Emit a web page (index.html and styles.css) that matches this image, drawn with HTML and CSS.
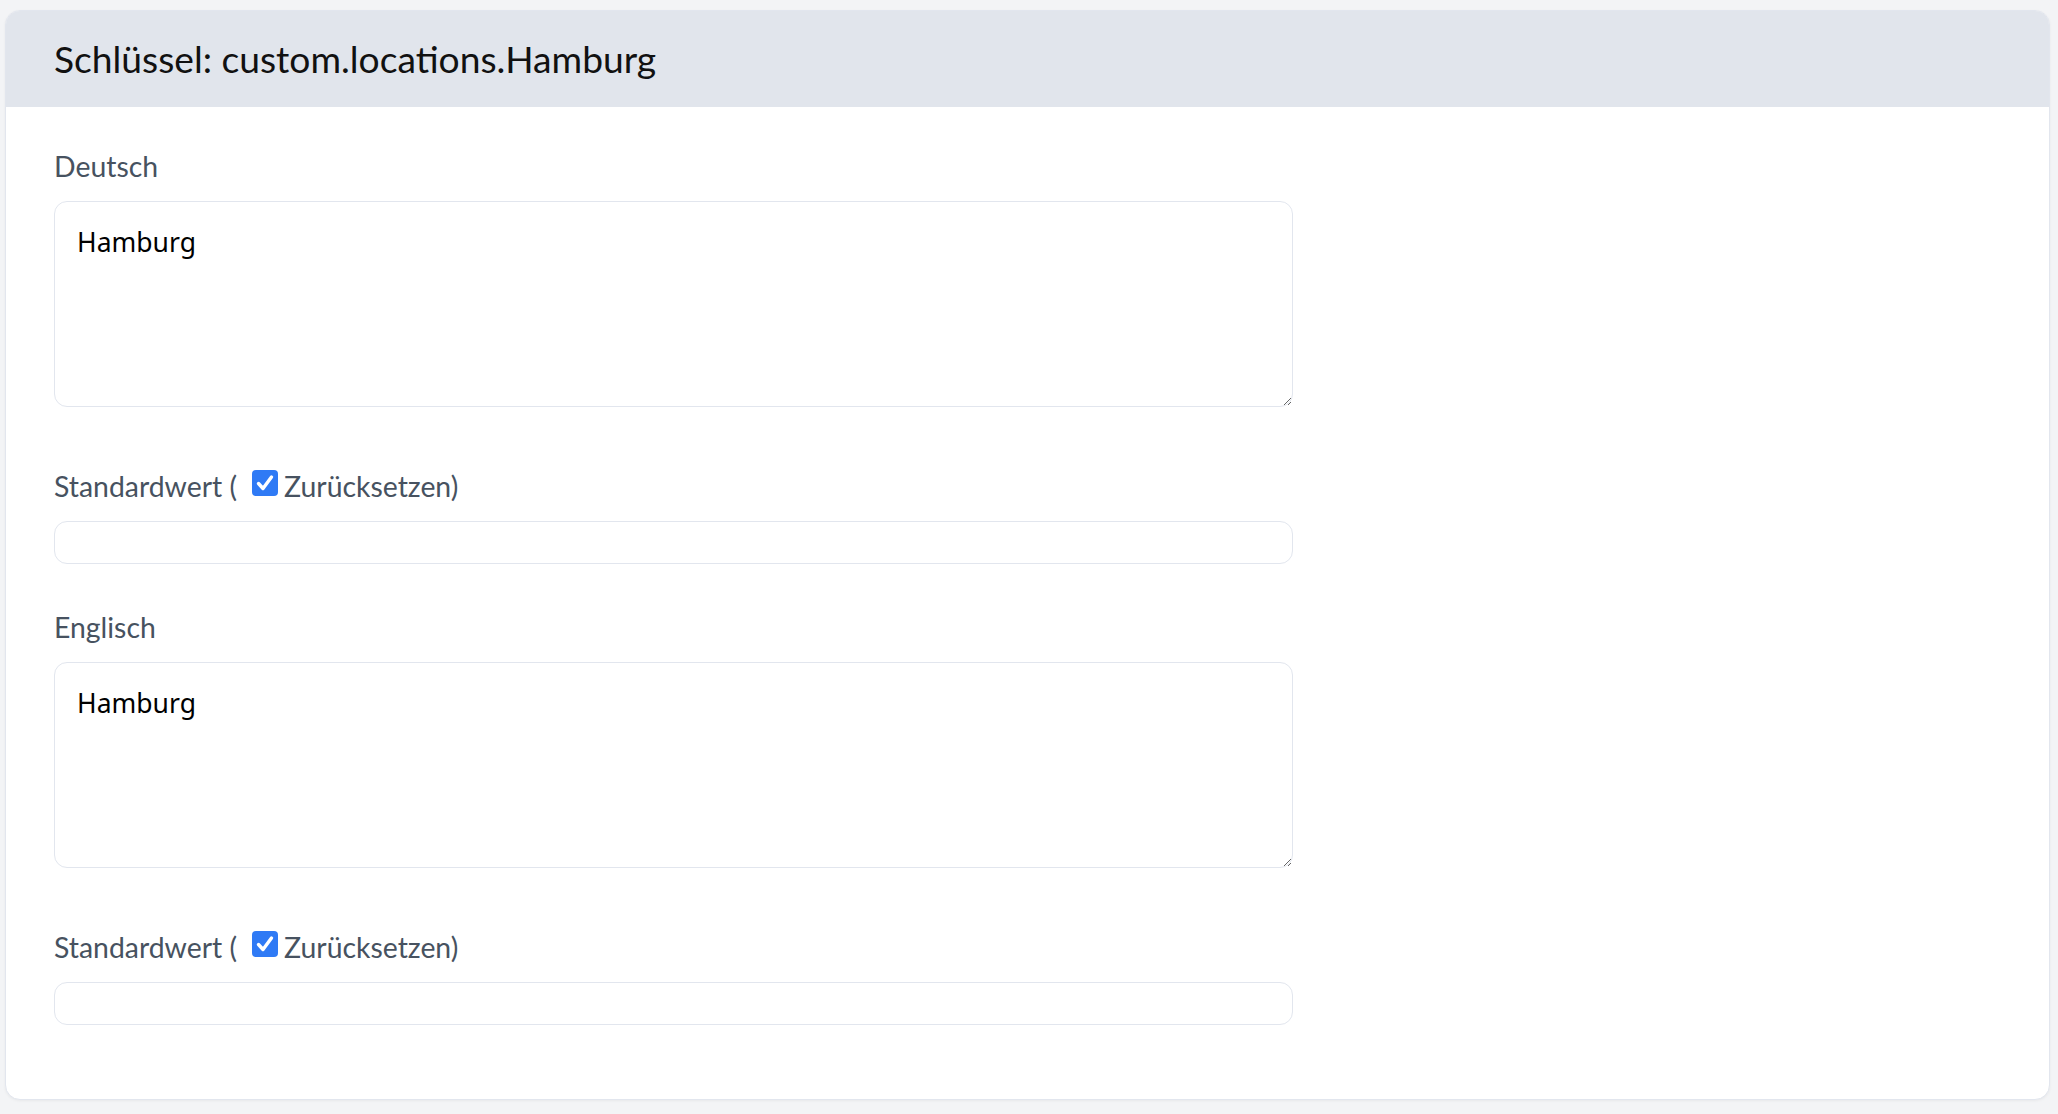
FILE: index.html
```html
<!DOCTYPE html>
<html lang="de">
<head>
<meta charset="utf-8">
<title>Schlüssel: custom.locations.Hamburg</title>
<link rel="stylesheet" href="styles.css">
</head>
<body>
<div class="card">
  <div class="card-header">
    <h1 class="card-title">Schlüssel: custom.locations.Hamburg</h1>
  </div>
  <div class="card-body">
    <div class="group group-area">
      <label class="label">Deutsch</label>
      <textarea class="area">Hamburg</textarea>
    </div>
    <div class="group group-input">
      <label class="label">Standardwert (<span class="check"><svg viewBox="0 0 26 26" width="26" height="26"><rect x="0" y="0" width="26" height="26" rx="4" fill="#2f7af5"/><path d="M6.5 13.5 L11 18.5 L19.5 7" fill="none" stroke="#fff" stroke-width="3.4" stroke-linecap="round" stroke-linejoin="round"/></svg></span>Zurücksetzen)</label>
      <input class="field" type="text">
    </div>
    <div class="group group-area">
      <label class="label">Englisch</label>
      <textarea class="area">Hamburg</textarea>
    </div>
    <div class="group group-input last">
      <label class="label">Standardwert (<span class="check"><svg viewBox="0 0 26 26" width="26" height="26"><rect x="0" y="0" width="26" height="26" rx="4" fill="#2f7af5"/><path d="M6.5 13.5 L11 18.5 L19.5 7" fill="none" stroke="#fff" stroke-width="3.4" stroke-linecap="round" stroke-linejoin="round"/></svg></span>Zurücksetzen)</label>
      <input class="field" type="text">
    </div>
  </div>
</div>
</body>
</html>
```
FILE: styles.css
```css
html, body {
  margin: 0;
  padding: 0;
  background: #f3f4f6;
}
body {
  padding: 10px 8px 0 5px;
  font-family: Lato, "Noto Sans", sans-serif;
  box-sizing: border-box;
  height: 1114px;
}
.card {
  background: #fff;
  border: 1.5px solid #e2e6ee;
  border-radius: 15px;
  overflow: hidden;
  box-shadow: 0 1px 3px rgba(0,0,0,0.05);
  height: 1090px;
  box-sizing: border-box;
}
.card-header {
  background: #e1e5ec;
  height: 96px;
  display: flex;
  align-items: center;
  padding: 0 48px;
}
.card-title {
  margin: 0;
  font-size: 37.2px;
  font-weight: 400;
  color: #111;
  line-height: 1;
}
.card-body {
  padding: 40px 48px 0 48px;
}
.group {
  display: flex;
  flex-direction: column;
  align-items: flex-start;
}
.group-area { margin-bottom: 60px; }
.group-input { margin-bottom: 43.5px; }
.label {
  font-size: 28.4px;
  line-height: 38px;
  color: #475260;
  margin-bottom: 16px;
  display: flex;
  align-items: center;
  white-space: pre;
}
.check {
  display: inline-flex;
  width: 26px;
  height: 26px;
  margin: -6px 6px 0 15px;
}
.area {
  display: block;
  width: 1239px;
  height: 206px;
  box-sizing: border-box;
  border: 1.6px solid #e2e6ee;
  border-radius: 13px;
  padding: 22px 22px;
  font-family: "Noto Sans", sans-serif;
  font-size: 26.5px;
  line-height: 36px;
  color: #000;
  background: #fff;
  outline: none;
  resize: vertical;
}
.field {
  display: block;
  width: 1239px;
  height: 43px;
  box-sizing: border-box;
  border: 1.6px solid #e2e6ee;
  border-radius: 13px;
  padding: 0 20px;
  font-size: 25px;
  background: #fff;
  outline: none;
}
```
